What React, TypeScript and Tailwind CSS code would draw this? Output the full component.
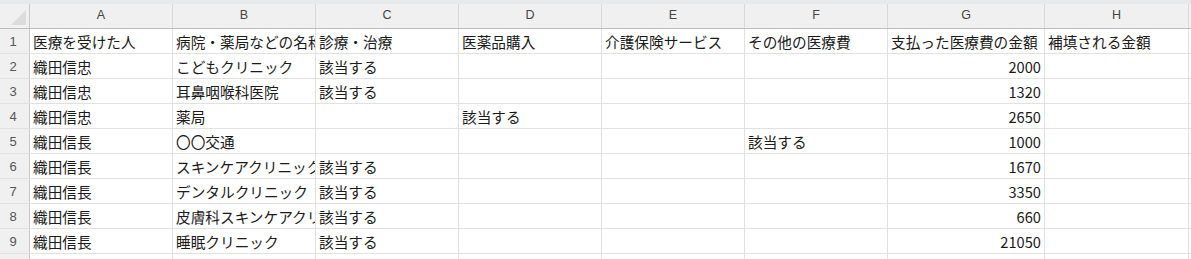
import React from "react";

const cols = ["A", "B", "C", "D", "E", "F", "G", "H"];
const widths = ["w-[143px]", "w-[143px]", "w-[143px]", "w-[143px]", "w-[143px]", "w-[143px]", "w-[157px]", "w-[144px]"];

type Row = (string | number)[];
const rows: Row[] = [
  ["医療を受けた人", "病院・薬局などの名称", "診療・治療", "医薬品購入", "介護保険サービス", "その他の医療費", "支払った医療費の金額", "補填される金額"],
  ["織田信忠", "こどもクリニック", "該当する", "", "", "", 2000, ""],
  ["織田信忠", "耳鼻咽喉科医院", "該当する", "", "", "", 1320, ""],
  ["織田信忠", "薬局", "", "該当する", "", "", 2650, ""],
  ["織田信長", "〇〇交通", "", "", "", "該当する", 1000, ""],
  ["織田信長", "スキンケアクリニック", "該当する", "", "", "", 1670, ""],
  ["織田信長", "デンタルクリニック", "該当する", "", "", "", 3350, ""],
  ["織田信長", "皮膚科スキンケアクリニック", "該当する", "", "", "", 660, ""],
  ["織田信長", "睡眠クリニック", "該当する", "", "", "", 21050, ""],
  ["", "", "", "", "", "", "", ""],
];

const font = { fontFamily: '"Noto Sans CJK JP", "Noto Sans", sans-serif' };

export default function App() {
  return (
    <div className="w-[1191px] h-[259px] overflow-hidden bg-white" style={font}>
      <div className="h-[4px] bg-[#e7e9ec]" />
      {/* column header */}
      <div className="flex h-[25px] bg-[#f0f0f0] border-b border-[#bdbdbd]">
        <div className="w-[30px] shrink-0 border-r border-[#c8c8c8] relative">
          <svg className="absolute left-[11px] top-[6px]" width="15" height="15" viewBox="0 0 15 15">
            <polygon points="15,0 15,15 0,15" fill="#dcdcdc" />
          </svg>
        </div>
        {cols.map((c, i) => (
          <div
            key={c}
            className={`${widths[i]} shrink-0 border-r border-[#d9d9d9] flex justify-center pt-[4px] text-[12.5px] leading-[14px] text-[#444]`}
            style={{ fontFamily: '"Liberation Sans", sans-serif' }}
          >
            {c}
          </div>
        ))}
        <div className="flex-1" />
      </div>
      {rows.map((r, ri) => (
        <div key={ri} className="flex h-[25px] border-b border-[#e1e1e1]">
          <div
            className="w-[30px] shrink-0 bg-[#f0f0f0] border-r border-[#c8c8c8] flex items-center justify-center pr-[3px] pt-[1px] text-[13px] text-[#555]"
            style={{ fontFamily: '"Liberation Sans", sans-serif' }}
          >
            {ri < 9 ? ri + 1 : ""}
          </div>
          {r.map((v, ci) => (
            <div
              key={ci}
              className={`${widths[ci]} shrink-0 border-r border-[#e1e1e1] flex items-center pt-[1px] text-[14.67px] leading-[20px] text-[#1a1a1a] whitespace-nowrap overflow-hidden ${
                typeof v === "number" ? "justify-end pr-[3px]" : "pl-[3px]"
              }`}
            >
              {v}
            </div>
          ))}
          <div className="flex-1" />
        </div>
      ))}
    </div>
  );
}
